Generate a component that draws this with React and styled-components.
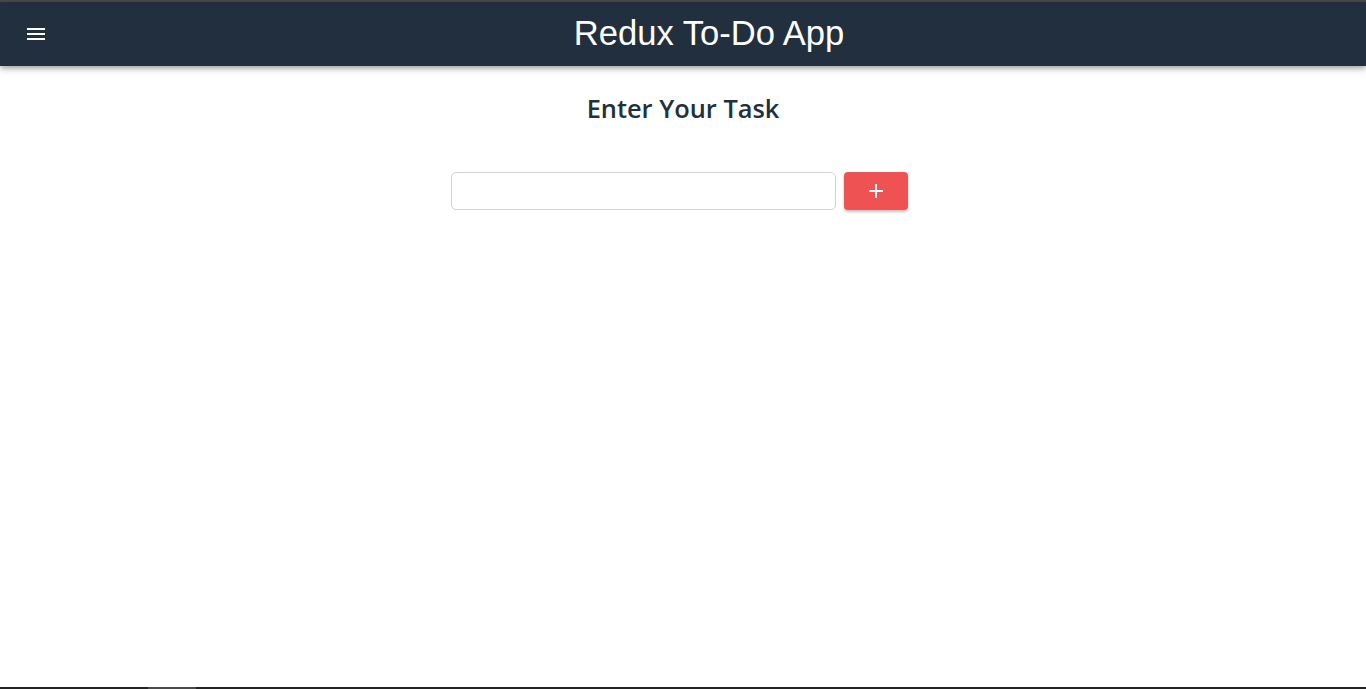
import React, { useState } from "react";
import styled, { createGlobalStyle } from "styled-components";

const GlobalStyle = createGlobalStyle`
  * { box-sizing: border-box; }
  html, body { margin: 0; padding: 0; background: #fff; }
  body { font-family: "Open Sans", "Noto Sans", sans-serif; }
`;

const Page = styled.div`
  min-height: 100vh;
  display: flex;
  flex-direction: column;
  border-top: 2px solid #4a4a4a;
`;

const Header = styled.header`
  height: 64px;
  background: #222f3e;
  display: flex;
  align-items: center;
  box-shadow: 0 2px 4px -1px rgba(0, 0, 0, 0.2), 0 4px 5px 0 rgba(0, 0, 0, 0.14),
    0 1px 10px 0 rgba(0, 0, 0, 0.12);
  position: relative;
  z-index: 2;
`;

const MenuButton = styled.button`
  width: 52px;
  height: 48px;
  padding: 0 0 0 24px;
  border: none;
  background: transparent;
  display: flex;
  align-items: center;
  cursor: pointer;
`;

const Title = styled.h1`
  flex: 1;
  margin: 0;
  text-align: center;
  color: #fff;
  font-family: "Liberation Sans", Arial, sans-serif;
  font-weight: 400;
  font-size: 34.6px;
  line-height: 1;
  padding-bottom: 2px;
`;

const Main = styled.main`
  flex: 1;
  display: flex;
  flex-direction: column;
  align-items: center;
  padding-top: 24px;
`;

const Heading = styled.h2`
  margin: 0;
  color: #222f3e;
  font-family: "Open Sans", "Noto Sans", sans-serif;
  font-weight: 600;
  font-size: 25.4px;
  line-height: 36px;
`;

const Form = styled.form`
  display: flex;
  gap: 8px;
  margin-top: 46px;
  padding-right: 7px;
`;

const TaskInput = styled.input`
  width: 385px;
  height: 38px;
  border: 1px solid #cfd1d8;
  border-radius: 5px;
  padding: 0 12px;
  font-size: 16px;
  font-family: "Open Sans", sans-serif;
  outline: none;
  &:focus { border-color: #9aa3b0; }
`;

const AddButton = styled.button`
  width: 64px;
  height: 38px;
  border: none;
  border-radius: 4px;
  background: #ee5253;
  color: #fff;
  display: flex;
  align-items: center;
  justify-content: center;
  cursor: pointer;
  box-shadow: 0 2px 3px rgba(0, 0, 0, 0.25);
`;

const BottomEdge = styled.div`
  height: 2px;
  background: #222;
  display: flex;
`;

const ScrollThumb = styled.span`
  width: 48px;
  margin-left: 148px;
  background: #4a4a4a;
`;

function MenuIcon() {
  return (
    <svg width="24" height="24" viewBox="0 0 24 24" fill="#fff">
      <path d="M3 18h18v-2H3v2zm0-5h18v-2H3v2zm0-7v2h18V6H3z" />
    </svg>
  );
}

function PlusIcon() {
  return (
    <svg width="16" height="16" viewBox="0 0 16 16" fill="none" stroke="#fff" strokeWidth="2">
      <path d="M8 1v14M1 8h14" />
    </svg>
  );
}

export default function App() {
  const [task, setTask] = useState("");
  return (
    <>
      <GlobalStyle />
      <Page>
        <Header>
          <MenuButton aria-label="menu">
            <MenuIcon />
          </MenuButton>
          <Title>Redux To-Do App</Title>
        </Header>
        <Main>
          <Heading>Enter Your Task</Heading>
          <Form onSubmit={(e) => { e.preventDefault(); setTask(""); }}>
            <TaskInput value={task} onChange={(e) => setTask(e.target.value)} />
            <AddButton type="submit" aria-label="add">
              <PlusIcon />
            </AddButton>
          </Form>
        </Main>
        <BottomEdge>
          <ScrollThumb />
        </BottomEdge>
      </Page>
    </>
  );
}
